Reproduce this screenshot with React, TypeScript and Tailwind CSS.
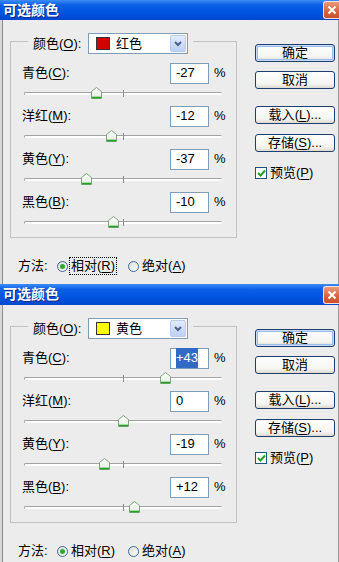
import React from "react";

const FONT = "font-['Liberation_Sans','Noto_Sans_CJK_SC',sans-serif]";

type Channel = { name: string; k: string; value: number; text: string };

function Mn({ text, k, tail = "" }: { text: string; k: string; tail?: string }) {
  return (
    <span>
      {text}(<span className="underline underline-offset-[2px]">{k}</span>){tail}
    </span>
  );
}

function Slider({ value }: { value: number }) {
  const left = (value + 100) * 0.99 - 5.5;
  return (
    <div className="relative ml-[13px] flex h-[21px] w-[198px] flex-col pt-[8px]">
      <div className="h-[3px] rounded-full border-t border-l border-[#a3a3a3] bg-white" />
      <div className="absolute left-[99px] top-[6px] h-[7px] w-px bg-[#8c8c8c]" />
      <svg className="absolute top-[3px]" style={{ left }} width="11" height="12" viewBox="0 0 11 12">
        <defs>
          <linearGradient id="thumb" x1="0" y1="0" x2="0" y2="1">
            <stop offset="0" stopColor="#ffffff" />
            <stop offset="1" stopColor="#e3eee0" />
          </linearGradient>
        </defs>
        <path d="M0.5 4.5 L5.5 0.5 L10.5 4.5 V11.5 H0.5 Z" fill="url(#thumb)" stroke="#7fa57f" />
        <path d="M1 10.5 H10" stroke="#21a121" strokeWidth="1.6" />
      </svg>
    </div>
  );
}

function Row({ c, selected }: { c: Channel; selected?: boolean }) {
  return (
    <div className="flex flex-col">
      <div className="flex h-[22px] items-center pl-[11px]">
        <div className="w-[148px]">
          <Mn text={c.name} k={c.k} tail=":" />
        </div>
        <div className="flex h-[21px] w-[39px] items-center border border-[#7f9db9] bg-white pl-[5px]">
          {selected ? <span className="bg-[#316ac5] text-white">{c.text}</span> : c.text}
        </div>
        <span className="ml-[5px]">%</span>
      </div>
      <Slider value={c.value} />
    </div>
  );
}

function Btn({ children, def }: { children: React.ReactNode; def?: boolean }) {
  return (
    <div
      className={`flex h-[18px] w-[80px] items-center justify-center rounded-[3px] border border-[#1e3f6e] bg-[linear-gradient(180deg,#ffffff,#f4f4f0_75%,#dcd9d0)] ${
        def ? "shadow-[inset_0_0_0_1px_#c6dbf7,inset_0_0_0_2px_#9cbcec]" : ""
      }`}
    >
      {children}
    </div>
  );
}

function Radio({ on }: { on?: boolean }) {
  return (
    <span className="flex h-[11px] w-[11px] items-center justify-center rounded-full border border-[#3a6a98] bg-[linear-gradient(135deg,#dedbd2,#ffffff)]">
      {on && <span className="h-[5px] w-[5px] rounded-full bg-[#2fa82f]" />}
    </span>
  );
}

function Dialog({
  swatch,
  colorName,
  channels,
  selectFirst,
  focus,
  titleH,
  bodyH,
}: {
  swatch: string;
  colorName: string;
  channels: Channel[];
  selectFirst?: boolean;
  focus?: boolean;
  titleH: string;
  bodyH: string;
}) {
  return (
    <div className="flex flex-col">
      {/* title bar */}
      <div
        className={`flex items-center justify-between bg-[linear-gradient(180deg,#3f8cf6_0%,#0b5fe8_25%,#0055e1_60%,#0046cf_100%)] ${titleH}`}
      >
        <span className="pl-[3px] text-[14px] font-bold text-white [text-shadow:1px_1px_0_#0b2a8a]">可选颜色</span>
        <div className="flex h-[18px] w-[16px] items-center justify-center rounded-l-[3px] border border-r-0 border-[#f6e2da] bg-[linear-gradient(180deg,#e99a7c,#d8623b_60%,#c9512d)]">
          <svg width="10" height="10" viewBox="0 0 10 10">
            <path d="M1.5 1.5 L8.5 8.5 M8.5 1.5 L1.5 8.5" stroke="#fff" strokeWidth="2" />
          </svg>
        </div>
      </div>

      {/* body */}
      <div
        className={`flex overflow-hidden bg-[#ececec] text-[13px] text-black shadow-[inset_2px_0_#d8d8d8,inset_3px_0_#8c8c8c,inset_-1px_0_#9a9a9a] ${bodyH}`}
      >
        {/* left column */}
        <div className="ml-[10px] mt-[13px] flex w-[227px] flex-col">
          <div className="flex h-[21px]">
            <div className="mt-[8px] h-[13px] w-[18px] border-l border-t border-[#c2c2c2]" />
            <div className="flex w-[165px] items-center px-[5px]">
              <div className="w-[55px]">
                <Mn text="颜色" k="O" tail=":" />
              </div>
              <div className="flex h-[21px] w-[100px] items-center border border-[#7f9db9] bg-white pl-[7px] pr-[1px]">
                <span className="h-[13px] w-[14px] border border-[#333] bg-[var(--sw)]" style={{ ["--sw" as string]: swatch }} />
                <span className="ml-[6px] flex-1">{colorName}</span>
                <span className="flex h-[17px] w-[16px] items-center justify-center rounded-[2px] border border-[#b7cbf3] bg-[linear-gradient(180deg,#e3ecfe,#bcd0fa)]">
                  <svg width="8" height="6" viewBox="0 0 8 6">
                    <path d="M1 1 L4 4 L7 1" stroke="#4d6185" strokeWidth="2" fill="none" />
                  </svg>
                </span>
              </div>
            </div>
            <div className="mt-[8px] h-[13px] flex-1 border-r border-t border-[#c2c2c2]" />
          </div>
          <div className="flex flex-col border-x border-b border-[#c2c2c2] pb-[3px] pt-[8px]">
            {channels.map((c, i) => (
              <Row key={c.name} c={c} selected={selectFirst && i === 0} />
            ))}
          </div>

          {/* method */}
          <div className="mt-[19px] flex h-[18px] items-center pl-[8px]">
            <span className="w-[39px]">方法:</span>
            <Radio on />
            <span
              className={`ml-[1px] flex h-[18px] items-center border border-dotted px-[1px] ${
                focus ? "border-black" : "border-transparent"
              }`}
            >
              <Mn text="相对" k="R" />
            </span>
            <span className="ml-[11px]">
              <Radio />
            </span>
            <span className="ml-[3px]">
              <Mn text="绝对" k="A" />
            </span>
          </div>
        </div>

        {/* right column */}
        <div className="ml-[18px] mt-[24px] flex w-[80px] flex-col">
          <Btn def>确定</Btn>
          <div className="mt-[9px]">
            <Btn>取消</Btn>
          </div>
          <div className="mt-[17px]">
            <Btn>
              <Mn text="载入" k="L" tail="..." />
            </Btn>
          </div>
          <div className="mt-[10px]">
            <Btn>
              <Mn text="存储" k="S" tail="..." />
            </Btn>
          </div>
          <div className="mt-[14px] flex h-[14px] items-center">
            <span className="flex h-[12px] w-[12px] items-center justify-center border border-[#1c5180] bg-white">
              <svg width="9" height="8" viewBox="0 0 9 8">
                <path d="M1 4 L3.5 6.5 L8 1.5" stroke="#21a121" strokeWidth="2" fill="none" />
              </svg>
            </span>
            <span className="ml-[3px]">
              <Mn text="预览" k="P" />
            </span>
          </div>
        </div>
      </div>
    </div>
  );
}

export default function App() {
  return (
    <div className={`h-[562px] w-[339px] overflow-hidden bg-[#ececec] ${FONT}`}>
      <Dialog
        swatch="#d40000"
        colorName="红色"
        focus
        titleH="h-[20px]"
        bodyH="h-[264px]"
        channels={[
          { name: "青色", k: "C", value: -27, text: "-27" },
          { name: "洋红", k: "M", value: -12, text: "-12" },
          { name: "黄色", k: "Y", value: -37, text: "-37" },
          { name: "黑色", k: "B", value: -10, text: "-10" },
        ]}
      />
      <Dialog
        swatch="#ffff00"
        colorName="黄色"
        selectFirst
        titleH="h-[21px]"
        bodyH="h-[257px]"
        channels={[
          { name: "青色", k: "C", value: 43, text: "+43" },
          { name: "洋红", k: "M", value: 0, text: "0" },
          { name: "黄色", k: "Y", value: -19, text: "-19" },
          { name: "黑色", k: "B", value: 12, text: "+12" },
        ]}
      />
    </div>
  );
}
